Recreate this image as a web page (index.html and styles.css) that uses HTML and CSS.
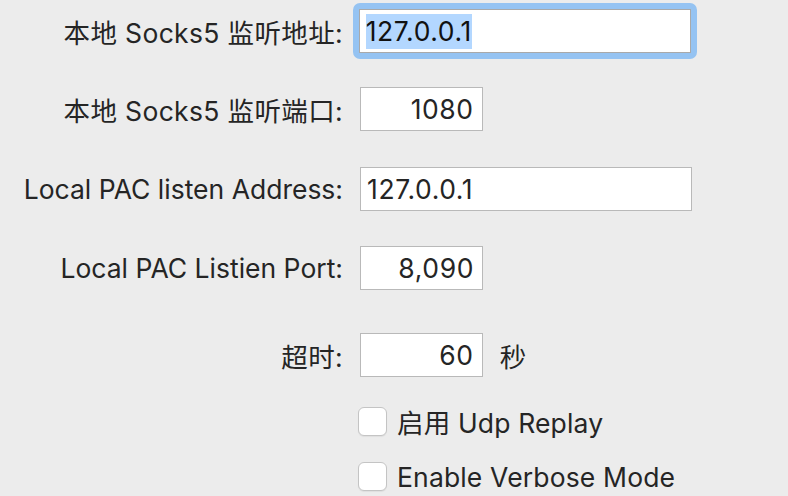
FILE: index.html
```html
<!DOCTYPE html>
<html lang="zh">
<head>
<meta charset="utf-8">
<link rel="stylesheet" href="styles.css">
</head>
<body>
<div class="form">
  <div class="row r1">
    <div class="label cjk">本地 Socks5 监听地址:</div>
    <div class="ring"><div class="field wide"><span class="sel">127.0.0.1</span></div></div>
  </div>
  <div class="row r2">
    <div class="label cjk">本地 Socks5 监听端口:</div>
    <div class="field narrow num">1080</div>
  </div>
  <div class="row r3">
    <div class="label">Local PAC listen Address:</div>
    <div class="field wide">127.0.0.1</div>
  </div>
  <div class="row r4">
    <div class="label">Local PAC Listien Port:</div>
    <div class="field narrow num">8,090</div>
  </div>
  <div class="row r5">
    <div class="label cjk">超时:</div>
    <div class="field narrow num">60</div>
    <div class="unit">秒</div>
  </div>
  <div class="check c1">
    <span class="box"></span><span class="ctext">启用 Udp Replay</span>
  </div>
  <div class="check c2">
    <span class="box"></span><span class="ctext">Enable Verbose Mode</span>
  </div>
</div>
</body>
</html>
```
FILE: styles.css
```css
html, body {
  margin: 0;
  padding: 0;
  background: #ececec;
  width: 788px;
  height: 496px;
  overflow: hidden;
}
body {
  font-family: "Inter", "Noto Sans CJK SC", sans-serif;
  font-size: 26.5px;
  color: #252525;
}
.form {
  display: flex;
  flex-direction: column;
  padding-top: 9px;
}
.row {
  display: flex;
  align-items: center;
  height: 44px;
}
.r2 { margin-top: 34px; }
.r3 { margin-top: 36px; }
.r4 { margin-top: 35px; }
.r5 { margin-top: 43px; }
.label {
  width: 343px;
  margin-right: 17px;
  text-align: right;
  white-space: nowrap;
}
.label.cjk {
  letter-spacing: 0.35px;
  margin-right: 16.65px;
}
.ring {
  margin: -7px;
  padding: 6px;
  background: #95c3f2;
  border-radius: 7px;
}
.field {
  box-sizing: border-box;
  height: 44px;
  border: 1px solid #b9b9b9;
  background: #fff;
  display: flex;
  align-items: center;
  padding: 0 6px;
  white-space: nowrap;
  letter-spacing: 0.6px;
}
.ring .field {
  border: 1px solid #a9a9a9;
}
.wide { width: 332px; }
.narrow { width: 123px; justify-content: flex-end; padding-right: 8px; }
.sel {
  background: #b3d7ff;
  line-height: 35px;
  color: #111;
}
.unit {
  margin-left: 17px;
}
.check {
  display: flex;
  align-items: center;
  margin-left: 358px;
  height: 29px;
}
.c1 { margin-top: 30px; }
.c2 { margin-top: 26px; }
.box {
  box-sizing: border-box;
  width: 29px;
  height: 29px;
  border: 1px solid #c4c4c4;
  border-radius: 6px;
  background: #fff;
  box-shadow: 0 1px 1px rgba(0,0,0,0.06);
}
.ctext {
  margin-left: 10px;
  white-space: nowrap;
  letter-spacing: 0.15px;
}
```
